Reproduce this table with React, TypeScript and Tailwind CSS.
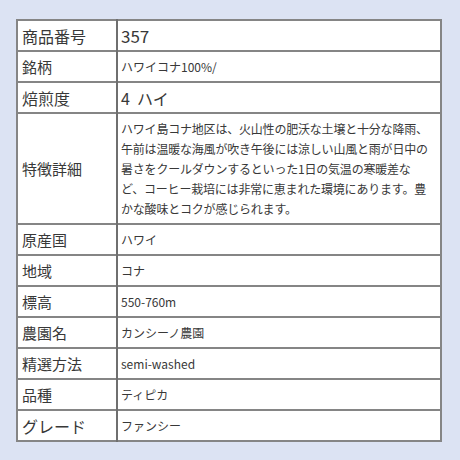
import React from "react";

const rows: { label: string; value: React.ReactNode; labelSize: string; valueSize: string; h: string }[] = [
	{ label: "商品番号", value: "357", labelSize: "text-[16px]", valueSize: "text-[17px]", h: "h-[31px]" },
	{ label: "銘柄", value: "ハワイコナ100%/", labelSize: "text-[15px]", valueSize: "text-[12px]", h: "h-[31px]" },
	{ label: "焙煎度", value: "4  ハイ", labelSize: "text-[16px]", valueSize: "text-[16px]", h: "h-[31px]" },
];

const rows2: { label: string; value: string; labelSize: string }[] = [
	{ label: "原産国", value: "ハワイ", labelSize: "text-[15px]" },
	{ label: "地域", value: "コナ", labelSize: "text-[15px]" },
	{ label: "標高", value: "550-760m", labelSize: "text-[15px]" },
	{ label: "農園名", value: "カンシーノ農園", labelSize: "text-[15px]" },
	{ label: "精選方法", value: "semi-washed", labelSize: "text-[15px]" },
	{ label: "品種", value: "ティピカ", labelSize: "text-[15px]" },
	{ label: "グレード", value: "ファンシー", labelSize: "text-[16px]" },
];

const detail = [
	"ハワイ島コナ地区は、火山性の肥沃な土壌と十分な降雨、",
	"午前は温暖な海風が吹き午後には涼しい山風と雨が日中の",
	"暑さをクールダウンするといった1日の気温の寒暖差な",
	"ど、コーヒー栽培には非常に恵まれた環境にあります。豊",
	"かな酸味とコクが感じられます。",
];

const App = () => {
	return (
		<div
			className="w-[460px] h-[460px] bg-[#dce3f3] pt-[19px] pl-[16px] text-[#383838]"
			style={{ fontFamily: '"Noto Sans CJK JP", "Liberation Sans", sans-serif' }}
		>
			<table className="w-[426px] border-collapse border-2 border-[#858585] bg-white">
				<tbody>
					{rows.map((r) => (
						<tr key={r.label} className={`${r.h} border-b-2 border-[#858585]`}>
							<td className={`w-[100px] pl-[4px] border-r-2 border-[#6f6f6f] leading-none ${r.labelSize}`}>
								{r.label}
							</td>
							<td className={`pl-[3px] leading-none whitespace-pre ${r.valueSize}`}>{r.value}</td>
						</tr>
					))}
					<tr className="h-[111px] border-b-2 border-[#858585]">
						<td className="w-[100px] pl-[4px] border-r-2 border-[#6f6f6f] text-[15px] leading-none">
							特徴詳細
						</td>
						<td className="pl-[3px] pt-[1px] text-[12px] leading-[20px] tracking-[-0.2px]">
							{detail.map((l) => (
								<div key={l} className="whitespace-nowrap">
									{l}
								</div>
							))}
						</td>
					</tr>
					{rows2.map((r, i) => (
						<tr
							key={r.label}
							className={`h-[31px] ${i < rows2.length - 1 ? "border-b-2 border-[#858585]" : ""}`}
						>
							<td className={`w-[100px] pl-[4px] border-r-2 border-[#6f6f6f] leading-none ${r.labelSize}`}>
								{r.label}
							</td>
							<td className="pl-[3px] text-[12px] leading-none">{r.value}</td>
						</tr>
					))}
				</tbody>
			</table>
		</div>
	);
};

export default App;
